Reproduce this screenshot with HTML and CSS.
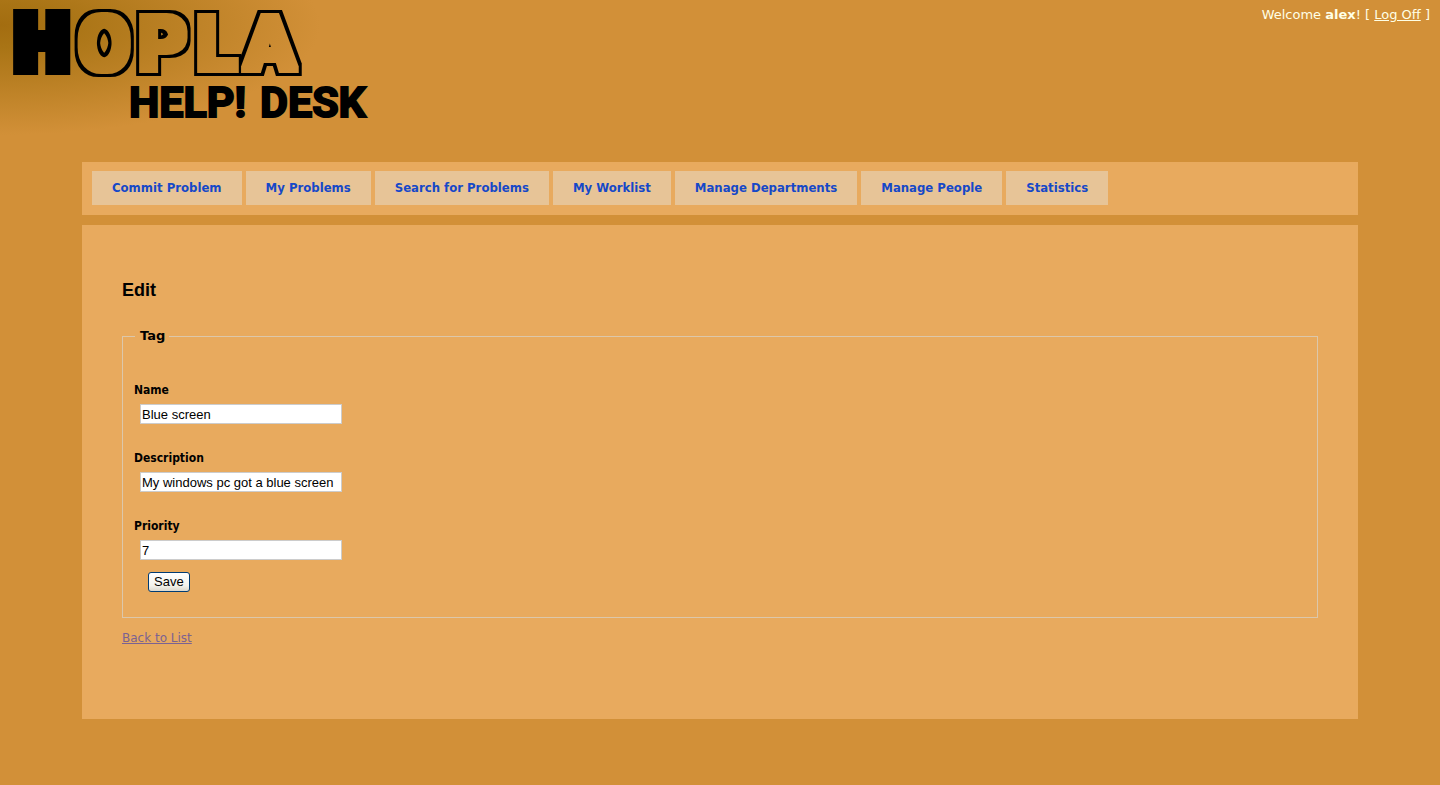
FILE: index.html
```html
<!DOCTYPE html>
<html lang="en">
<head>
<meta charset="utf-8">
<title>Edit</title>
<link rel="stylesheet" href="styles.css">
</head>
<body>
<header class="header">
  <svg class="logo" width="380" height="122" viewBox="0 0 380 122">
    <defs>
      <filter id="fat" filterUnits="userSpaceOnUse" x="0" y="0" width="380" height="122">
        <feMorphology in="SourceGraphic" operator="dilate" radius="6"/>
        <feGaussianBlur stdDeviation="0.5"/>
      </filter>
      <filter id="outline" filterUnits="userSpaceOnUse" x="0" y="0" width="380" height="122">
        <feMorphology in="SourceGraphic" operator="dilate" radius="3" result="inner"/>
        <feMorphology in="SourceGraphic" operator="dilate" radius="6" result="outer"/>
        <feComposite in="outer" in2="inner" operator="out"/>
        <feGaussianBlur stdDeviation="0.4"/>
      </filter>
    </defs>
    <text class="logo-name" filter="url(#fat)" x="15" y="69">H</text>
    <text class="logo-name" filter="url(#outline)" x="78 138 196 244" y="70">OPLA</text>
    <text class="logo-sub" y="117"><tspan x="129">HELP!</tspan> <tspan x="260">DESK</tspan></text>
  </svg>
  <div class="login">Welcome <b>alex</b>! [ <a href="#">Log Off</a> ]</div>
</header>
<div class="page">
  <nav class="menu">
    <a href="#">Commit Problem</a>
    <a href="#">My Problems</a>
    <a href="#">Search for Problems</a>
    <a href="#">My Worklist</a>
    <a href="#">Manage Departments</a>
    <a href="#">Manage People</a>
    <a href="#">Statistics</a>
  </nav>
  <main class="main">
    <h2 class="title">Edit</h2>
    <form>
      <fieldset class="group">
        <legend>Tag</legend>
        <div class="field">
          <label for="name">Name</label>
          <input id="name" type="text" value="Blue screen">
        </div>
        <div class="field">
          <label for="description">Description</label>
          <input id="description" type="text" value="My windows pc got a blue screen">
        </div>
        <div class="field">
          <label for="priority">Priority</label>
          <input id="priority" type="text" value="7">
        </div>
        <button class="save" type="submit">Save</button>
      </fieldset>
    </form>
    <a class="back" href="#">Back to List</a>
  </main>
</div>
</body>
</html>
```
FILE: styles.css
```css
* { box-sizing: border-box; }

body {
  margin: 0;
  min-height: 100vh;
  background: #d29038 radial-gradient(ellipse 320px 110px at 0 25px, #a36d10, #a97415 20%, #d29038) no-repeat;
  color: #000;
  font: 12px/18px Verdana, "DejaVu Sans", sans-serif;
}

.header {
  display: flex;
  justify-content: space-between;
  align-items: flex-start;
  padding: 0 10px 40px 0;
}

.logo {
  font-family: Roboto, "Liberation Sans", sans-serif;
  font-weight: 900;
}

.logo-name { font-size: 76px; }

.logo-sub {
  font-size: 43px;
  font-weight: 700;
  stroke: #000;
  stroke-width: 2px;
}

.login {
  padding-top: 6px;
  color: #ffffe6;
  font-size: 13px;
}

.login a { color: inherit; }

.page { padding: 0 82px 66px; }

.menu {
  display: flex;
  flex-wrap: wrap;
  gap: 4px;
  margin-bottom: 10px;
  padding: 9px 10px 10px;
  background: #e8aa5e;
}

.menu a {
  padding: 8px 20px;
  background: #e7c497;
  color: #1648c8;
  font: bold 13px/18px Tahoma, "DejaVu Sans Condensed", sans-serif;
  text-decoration: none;
}

.main {
  padding: 52px 40px 72px;
  background: #e8aa5e;
}

.title {
  margin: 0 0 24px;
  font: bold 18px/26px Arial, "Liberation Sans", sans-serif;
}

.group {
  margin: 0 0 11px;
  padding: 36px 11px 25px;
  border: 1px solid #dcc7aa;
}

.group legend {
  padding: 0 4px 0 5px;
  margin-left: 1px;
  font-size: 13px;
  font-weight: bold;
}

.field { margin-bottom: 25px; }
.field:last-of-type { margin-bottom: 12px; }

.field label {
  display: block;
  margin-bottom: 5px;
  font: bold 12px/18px Tahoma, "DejaVu Sans Condensed", sans-serif;
}

.field input {
  display: block;
  width: 202px;
  height: 20px;
  margin-left: 6px;
  padding: 0 1px;
  border: 1px solid #ccc;
  background: #fff;
  color: #000;
  font: 13px/18px Arial, "Liberation Sans", sans-serif;
}

.save {
  display: block;
  margin-left: 14px;
  padding: 0 5px;
  border: 1px solid #003c74;
  border-radius: 3px;
  background: linear-gradient(#fff, #f3f3ec 70%, #dcd8cc);
  color: #000;
  font: 13px/18px Arial, "Liberation Sans", sans-serif;
}

.back { color: #7b6292; }
```
